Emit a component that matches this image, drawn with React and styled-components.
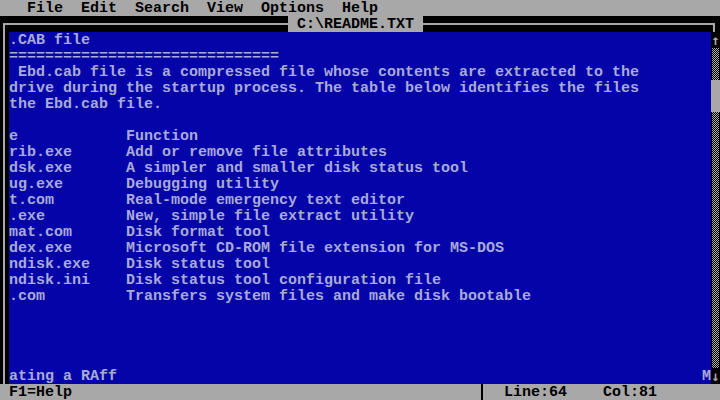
import React from 'react';
import styled, {createGlobalStyle} from 'styled-components';

const GlobalStyle = createGlobalStyle`
    html, body {
        margin: 0;
        padding: 0;
        background: #000;
    }
`

const GRAY = '#a8a8a8';
const BLUE = '#0404a8';
const TEXT = '#a8aad8';

const Screen = styled.div`
    width: 720px;
    height: 400px;
    background: #000;
    font-family: "Liberation Mono", "DejaVu Sans Mono", monospace;
    font-size: 15px;
    font-weight: bold;
    line-height: 18px;
    display: flex;
    flex-direction: column;
    overflow: hidden;
    white-space: pre;
`

const MenuBar = styled.div`
    height: 16px;
    background: ${GRAY};
    color: #000;
    padding-left: 27px;
    display: flex;
    gap: 18px;
`

const TitleRow = styled.div`
    height: 16px;
    display: flex;
`

const Rule = styled.div`
    margin-top: 7px;
    height: 9px;
    border-top: 2px solid ${GRAY};
    box-sizing: border-box;
    ${p => p.$side === 'left' ? `
        width: 285px;
        margin-left: 3px;
        border-left: 2px solid ${GRAY};
    ` : `
        flex: 1;
        margin-right: 5px;
        border-right: 2px solid ${GRAY};
    `}
`

const Title = styled.div`
    background: ${GRAY};
    color: #000;
    padding: 0 9px;
    height: 16px;
`

const Body = styled.div`
    display: flex;
    height: 352px;
`

const LeftBorder = styled.div`
    width: 9px;
    box-sizing: border-box;
    padding-left: 3px;
    &::before {
        content: '';
        display: block;
        width: 2px;
        height: 100%;
        background: ${GRAY};
    }
`

const Editor = styled.div`
    width: 702px;
    background: ${BLUE};
    color: ${TEXT};
    display: flex;
    flex-direction: column;
`

const Line = styled.div`
    height: 16px;
    display: flex;
`

const NameCell = styled.span`
    width: 117px;
    flex: none;
`

const Scrollbar = styled.div`
    width: 9px;
    display: flex;
    flex-direction: column;
`

const Arrow = styled.div`
    height: 16px;
    background: #000;
    color: ${GRAY};
    text-align: center;
    font-family: "DejaVu Sans Mono", monospace;
    font-size: 14px;
    line-height: 16px;
`

const Track = styled.div`
    height: ${p => p.$h}px;
    background: repeating-conic-gradient(${GRAY} 0 25%, #000 0 50%) 1px 0 / 2px 2px;
    border-left: 1px solid #000;
    border-right: 1px solid #000;
    box-sizing: border-box;
`

const Thumb = styled.div`
    height: 32px;
    background: ${GRAY};
`

const StatusBar = styled.div`
    height: 16px;
    background: ${GRAY};
    color: #000;
    display: flex;
`

const StatusLeft = styled.div`
    width: 468px;
    padding-left: 9px;
`

const Divider = styled.div`
    width: 9px;
    box-sizing: border-box;
    padding-left: 4px;
    &::before {
        content: '';
        display: block;
        width: 2px;
        height: 100%;
        background: #000;
    }
`

const StatusRight = styled.div`
    padding-left: 18px;
    display: flex;
    gap: 36px;
`

const menus = ['File', 'Edit', 'Search', 'View', 'Options', 'Help'];

const files = [
    ['e', 'Function'],
    ['rib.exe', 'Add or remove file attributes'],
    ['dsk.exe', 'A simpler and smaller disk status tool'],
    ['ug.exe', 'Debugging utility'],
    ['t.com', 'Real-mode emergency text editor'],
    ['.exe', 'New, simple file extract utility'],
    ['mat.com', 'Disk format tool'],
    ['dex.exe', 'Microsoft CD-ROM file extension for MS-DOS'],
    ['ndisk.exe', 'Disk status tool'],
    ['ndisk.ini', 'Disk status tool configuration file'],
    ['.com', 'Transfers system files and make disk bootable'],
];

const intro = [
    '.CAB file',
    '==============================',
    ' Ebd.cab file is a compressed file whose contents are extracted to the',
    'drive during the startup process. The table below identifies the files',
    'the Ebd.cab file.',
    '',
];

const App = () => {
    return (
        <>
            <GlobalStyle/>
            <Screen>
                <MenuBar>
                    {menus.map(m => <span key={m}>{m}</span>)}
                </MenuBar>
                <TitleRow>
                    <Rule $side="left"/>
                    <Title>C:\README.TXT</Title>
                    <Rule $side="right"/>
                </TitleRow>
                <Body>
                    <LeftBorder/>
                    <Editor>
                        {intro.map((t, i) => <Line key={'i' + i}>{t}</Line>)}
                        {files.map(([name, desc]) => (
                            <Line key={name}>
                                <NameCell>{name}</NameCell>
                                <span>{desc}</span>
                            </Line>
                        ))}
                        <Line/>
                        <Line/>
                        <Line/>
                        <Line/>
                        <Line>{'ating a RAff'.padEnd(77) + 'M'}</Line>
                    </Editor>
                    <Scrollbar>
                        <Arrow>↑</Arrow>
                        <Track $h={32}/>
                        <Thumb/>
                        <Track $h={256}/>
                        <Arrow>↓</Arrow>
                    </Scrollbar>
                </Body>
                <StatusBar>
                    <StatusLeft>F1=Help</StatusLeft>
                    <Divider/>
                    <StatusRight>
                        <span>Line:64</span>
                        <span>Col:81</span>
                    </StatusRight>
                </StatusBar>
            </Screen>
        </>
    )
}

export default App;
